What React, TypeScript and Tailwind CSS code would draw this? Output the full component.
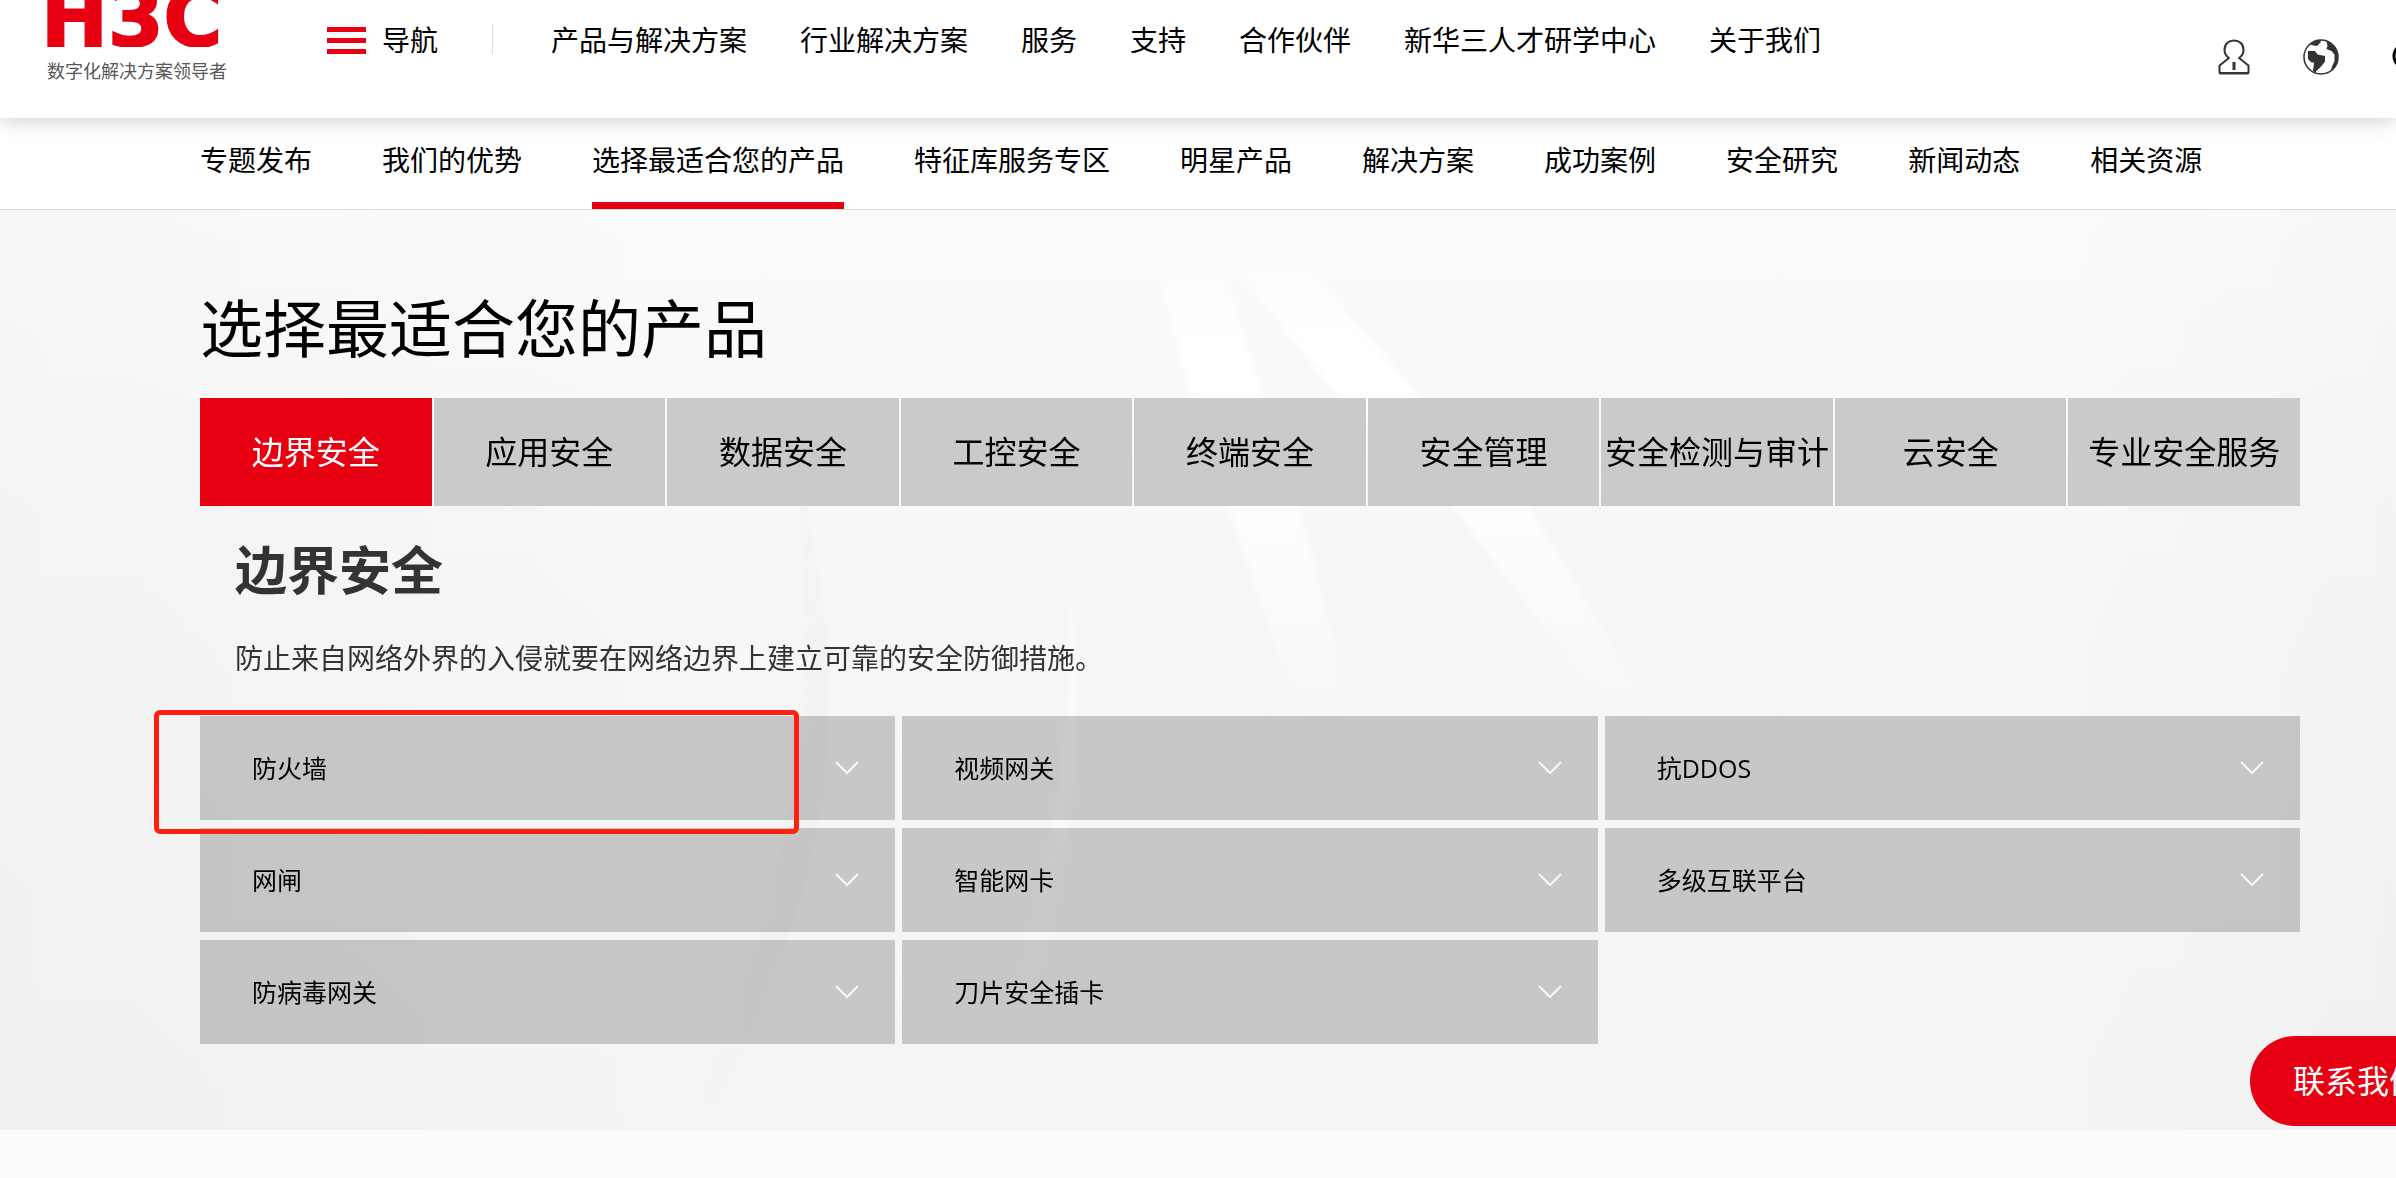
import { useState } from 'react'

const mainNav = [
  '产品与解决方案',
  '行业解决方案',
  '服务',
  '支持',
  '合作伙伴',
  '新华三人才研学中心',
  '关于我们',
]

const subNav = [
  '专题发布',
  '我们的优势',
  '选择最适合您的产品',
  '特征库服务专区',
  '明星产品',
  '解决方案',
  '成功案例',
  '安全研究',
  '新闻动态',
  '相关资源',
]

const tabs = [
  '边界安全',
  '应用安全',
  '数据安全',
  '工控安全',
  '终端安全',
  '安全管理',
  '安全检测与审计',
  '云安全',
  '专业安全服务',
]

const products = [
  '防火墙',
  '视频网关',
  '抗DDOS',
  '网闸',
  '智能网卡',
  '多级互联平台',
  '防病毒网关',
  '刀片安全插卡',
]

function Logo() {
  return (
    <a href="#" className="block w-[184px] shrink-0">
      <svg className="block h-[47px] w-[184px]" viewBox="0 0 184 47" role="img" aria-label="H3C">
        <text
          x="-6"
          y="46"
          fill="#e60012"
          stroke="#e60012"
          strokeWidth="2"
          fontSize="80"
          fontWeight="700"
          fontFamily="'DejaVu Sans', sans-serif"
        >
          H3C
        </text>
      </svg>
      <span className="mt-3 block whitespace-nowrap text-[18px] leading-6 text-[#595757]">数字化解决方案领导者</span>
    </a>
  )
}

function UserIcon() {
  return (
    <svg className="h-9 w-8" viewBox="0 0 32 36" fill="none" stroke="#333" strokeWidth="2" strokeLinejoin="round">
      <path d="M11 19C8 17 6.500 14.500 6.500 11C6.500 5 10.500 1.500 16 1.500S25.500 5 25.500 11C25.500 14.500 24 17 21 19L30.500 26.500V33.500Q30.500 34.500 29.500 34.500H2.500Q1.500 34.500 1.500 33.500V26.500Z" />
      <path d="M1.500 34H30.500" />
      <path d="M16 23V31" strokeWidth="3" />
    </svg>
  )
}

function GlobeIcon() {
  return (
    <svg className="h-9 w-9" viewBox="0 0 36 36" fill="#333">
      <circle cx="18" cy="18" r="17" fill="none" stroke="#333" strokeWidth="1.500" />
      <path d="M7 5.500C10 2.500 14 1 18 1L17.500 3.500L14 7L10.500 6.500Z" />
      <path d="M5 12H12L14.500 15.500L22 17V22.500L18.500 27L11.500 34L10 32L11 23.500H8.500L5 20Z" />
      <path d="M23.500 2C30 4 35 11 35 18C35 25 32 30 27.500 33L29 27.500L31.500 22V15.500L28.500 12L23.500 10L24.500 7Z" />
    </svg>
  )
}

function SearchIcon() {
  return (
    <svg className="h-9 w-9" viewBox="0 0 36 36" fill="none" stroke="#000" strokeWidth="3">
      <circle cx="14" cy="17" r="12" />
      <path d="M23 26L32 34" />
    </svg>
  )
}

function ChevronIcon() {
  return (
    <svg className="h-[14px] w-6" viewBox="0 0 24 14" fill="none" stroke="#f7f7f7" strokeWidth="2">
      <path d="M1 1L12 12L23 1" />
    </svg>
  )
}

// Soft grey backdrop with the light beams behind the product section
function Backdrop() {
  return (
    <svg
      className="absolute inset-0 h-full w-full"
      viewBox="0 0 2396 920"
      preserveAspectRatio="none"
      aria-hidden="true"
    >
      <defs>
        <linearGradient id="base" x1="0" y1="0" x2="0" y2="1">
          <stop offset="0" stopColor="#fbfbfb" />
          <stop offset="0.35" stopColor="#f7f7f7" />
          <stop offset="1" stopColor="#f4f4f4" />
        </linearGradient>
        <linearGradient id="sides" x1="0" y1="0" x2="1" y2="0">
          <stop offset="0" stopColor="#000" stopOpacity="0.015" />
          <stop offset="0.3" stopColor="#000" stopOpacity="0" />
          <stop offset="0.85" stopColor="#000" stopOpacity="0" />
          <stop offset="1" stopColor="#000" stopOpacity="0.015" />
        </linearGradient>
        <linearGradient id="beam" x1="0" y1="0" x2="0" y2="1">
          <stop offset="0" stopColor="#fff" stopOpacity="0.2" />
          <stop offset="0.25" stopColor="#fff" stopOpacity="1" />
          <stop offset="0.7" stopColor="#fff" stopOpacity="0.6" />
          <stop offset="1" stopColor="#fff" stopOpacity="0.1" />
        </linearGradient>
        <linearGradient id="fold" x1="0" y1="0" x2="1" y2="0">
          <stop offset="0" stopColor="#000" stopOpacity="0" />
          <stop offset="1" stopColor="#000" stopOpacity="0.015" />
        </linearGradient>
        <filter id="soft">
          <feGaussianBlur stdDeviation="3" />
        </filter>
      </defs>
      <rect width="2396" height="920" fill="url(#base)" />
      <rect width="2396" height="920" fill="url(#sides)" />
      <g filter="url(#soft)">
        <path d="M1150 30L1215 30L1263 188L1299 296L1355 510L1299 510L1228 296L1192 188Z" fill="url(#beam)" />
        <path d="M1205 20L1275 20L1421 188L1528 296L1660 510L1614 510L1452 296L1340 188Z" fill="url(#beam)" />
        <path
          d="M980 60Q1075 260 1068 460T960 920L1000 920Q1090 640 1076 440T990 60Z"
          fill="url(#beam)"
          opacity="0.5"
        />
        <path d="M780 200Q840 400 826 560T700 920L690 920Q780 680 800 520T780 200Z" fill="url(#fold)" />
      </g>
    </svg>
  )
}

export default function App() {
  const [activeTab, setActiveTab] = useState(0)

  return (
    <div
      className="relative min-h-screen overflow-hidden bg-[#fbfbfb] text-black"
      style={{ fontFamily: '"Open Sans", "Noto Sans CJK SC", sans-serif' }}
    >
      <header className="relative z-10 flex h-[118px] items-start bg-white pl-[47px] shadow-[0_2px_20px_rgba(0,0,0,0.2)]">
        <Logo />

        <button type="button" className="ml-24 mt-5 flex items-center gap-4 text-[28px] leading-10">
          <span className="flex w-[39px] flex-col gap-[6px]">
            <span className="h-[5px] bg-[#e60012]" />
            <span className="h-[5px] bg-[#e60012]" />
            <span className="h-[5px] bg-[#e60012]" />
          </span>
          导航
        </button>
        <span className="ml-[54px] mt-6 h-[30px] w-px bg-[#ddd]" />

        <nav className="ml-[58px] mt-5 flex gap-[53px] whitespace-nowrap text-[28px] leading-10">
          {mainNav.map((item) => (
            <a key={item} href="#">
              {item}
            </a>
          ))}
        </nav>

        <div className="absolute left-full top-[39px] ml-[-178px] flex gap-[53px]">
          <button type="button" aria-label="用户">
            <UserIcon />
          </button>
          <button type="button" aria-label="语言">
            <GlobeIcon />
          </button>
          <button type="button" aria-label="搜索">
            <SearchIcon />
          </button>
        </div>
      </header>

      <nav className="flex h-[92px] gap-[70px] whitespace-nowrap border-b border-[#ddd] bg-white pl-[200px] text-[28px] leading-[84px]">
        {subNav.map((item, i) => (
          <a key={item} href="#" className={i === 2 ? 'border-b-[7px] border-[#e60012]' : ''}>
            {item}
          </a>
        ))}
      </nav>

      <main className="relative pb-[86px] pl-[200px] pr-24 pt-[72px]">
        <Backdrop />
        <div className="relative">
          <h1 className="text-[63px] leading-[92px]">选择最适合您的产品</h1>

          <div className="mt-6 grid grid-cols-9 gap-[2px]" role="tablist">
            {tabs.map((tab, i) => (
              <button
                key={tab}
                type="button"
                role="tab"
                aria-selected={activeTab === i}
                onClick={() => setActiveTab(i)}
                className={`h-[108px] whitespace-nowrap text-[32px] leading-10 ${
                  activeTab === i ? 'bg-[#e60012] text-white' : 'bg-[#c9caca]'
                }`}
              >
                {tab}
              </button>
            ))}
          </div>

          <div className="pl-[35px] text-[#333]">
            <h2 className="mt-6 text-[52px] font-bold leading-[80px]">{tabs[activeTab]}</h2>
            <p className="mt-7 text-[28px] leading-10">防止来自网络外界的入侵就要在网络边界上建立可靠的安全防御措施。</p>
          </div>

          <div className="relative mt-[38px]">
            <div className="grid grid-cols-3 gap-x-[7px] gap-y-2">
              {products.map((name) => (
                <button
                  key={name}
                  type="button"
                  className="flex h-[104px] items-center justify-between bg-black/19 pl-[52px] pr-9 text-[25px] leading-10"
                >
                  {name}
                  <ChevronIcon />
                </button>
              ))}
            </div>
            {/* highlight around the firewall entry */}
            <div className="pointer-events-none absolute -left-[46px] -top-[6px] h-[124px] w-[645px] rounded-md border-5 border-[#ff2010]" />
          </div>
        </div>
      </main>

      <button
        type="button"
        className="fixed left-full top-[1036px] ml-[-146px] h-[90px] w-[214px] whitespace-nowrap rounded-full bg-[#e60012] text-[32px] leading-10 text-white"
      >
        联系我们
      </button>
    </div>
  )
}
